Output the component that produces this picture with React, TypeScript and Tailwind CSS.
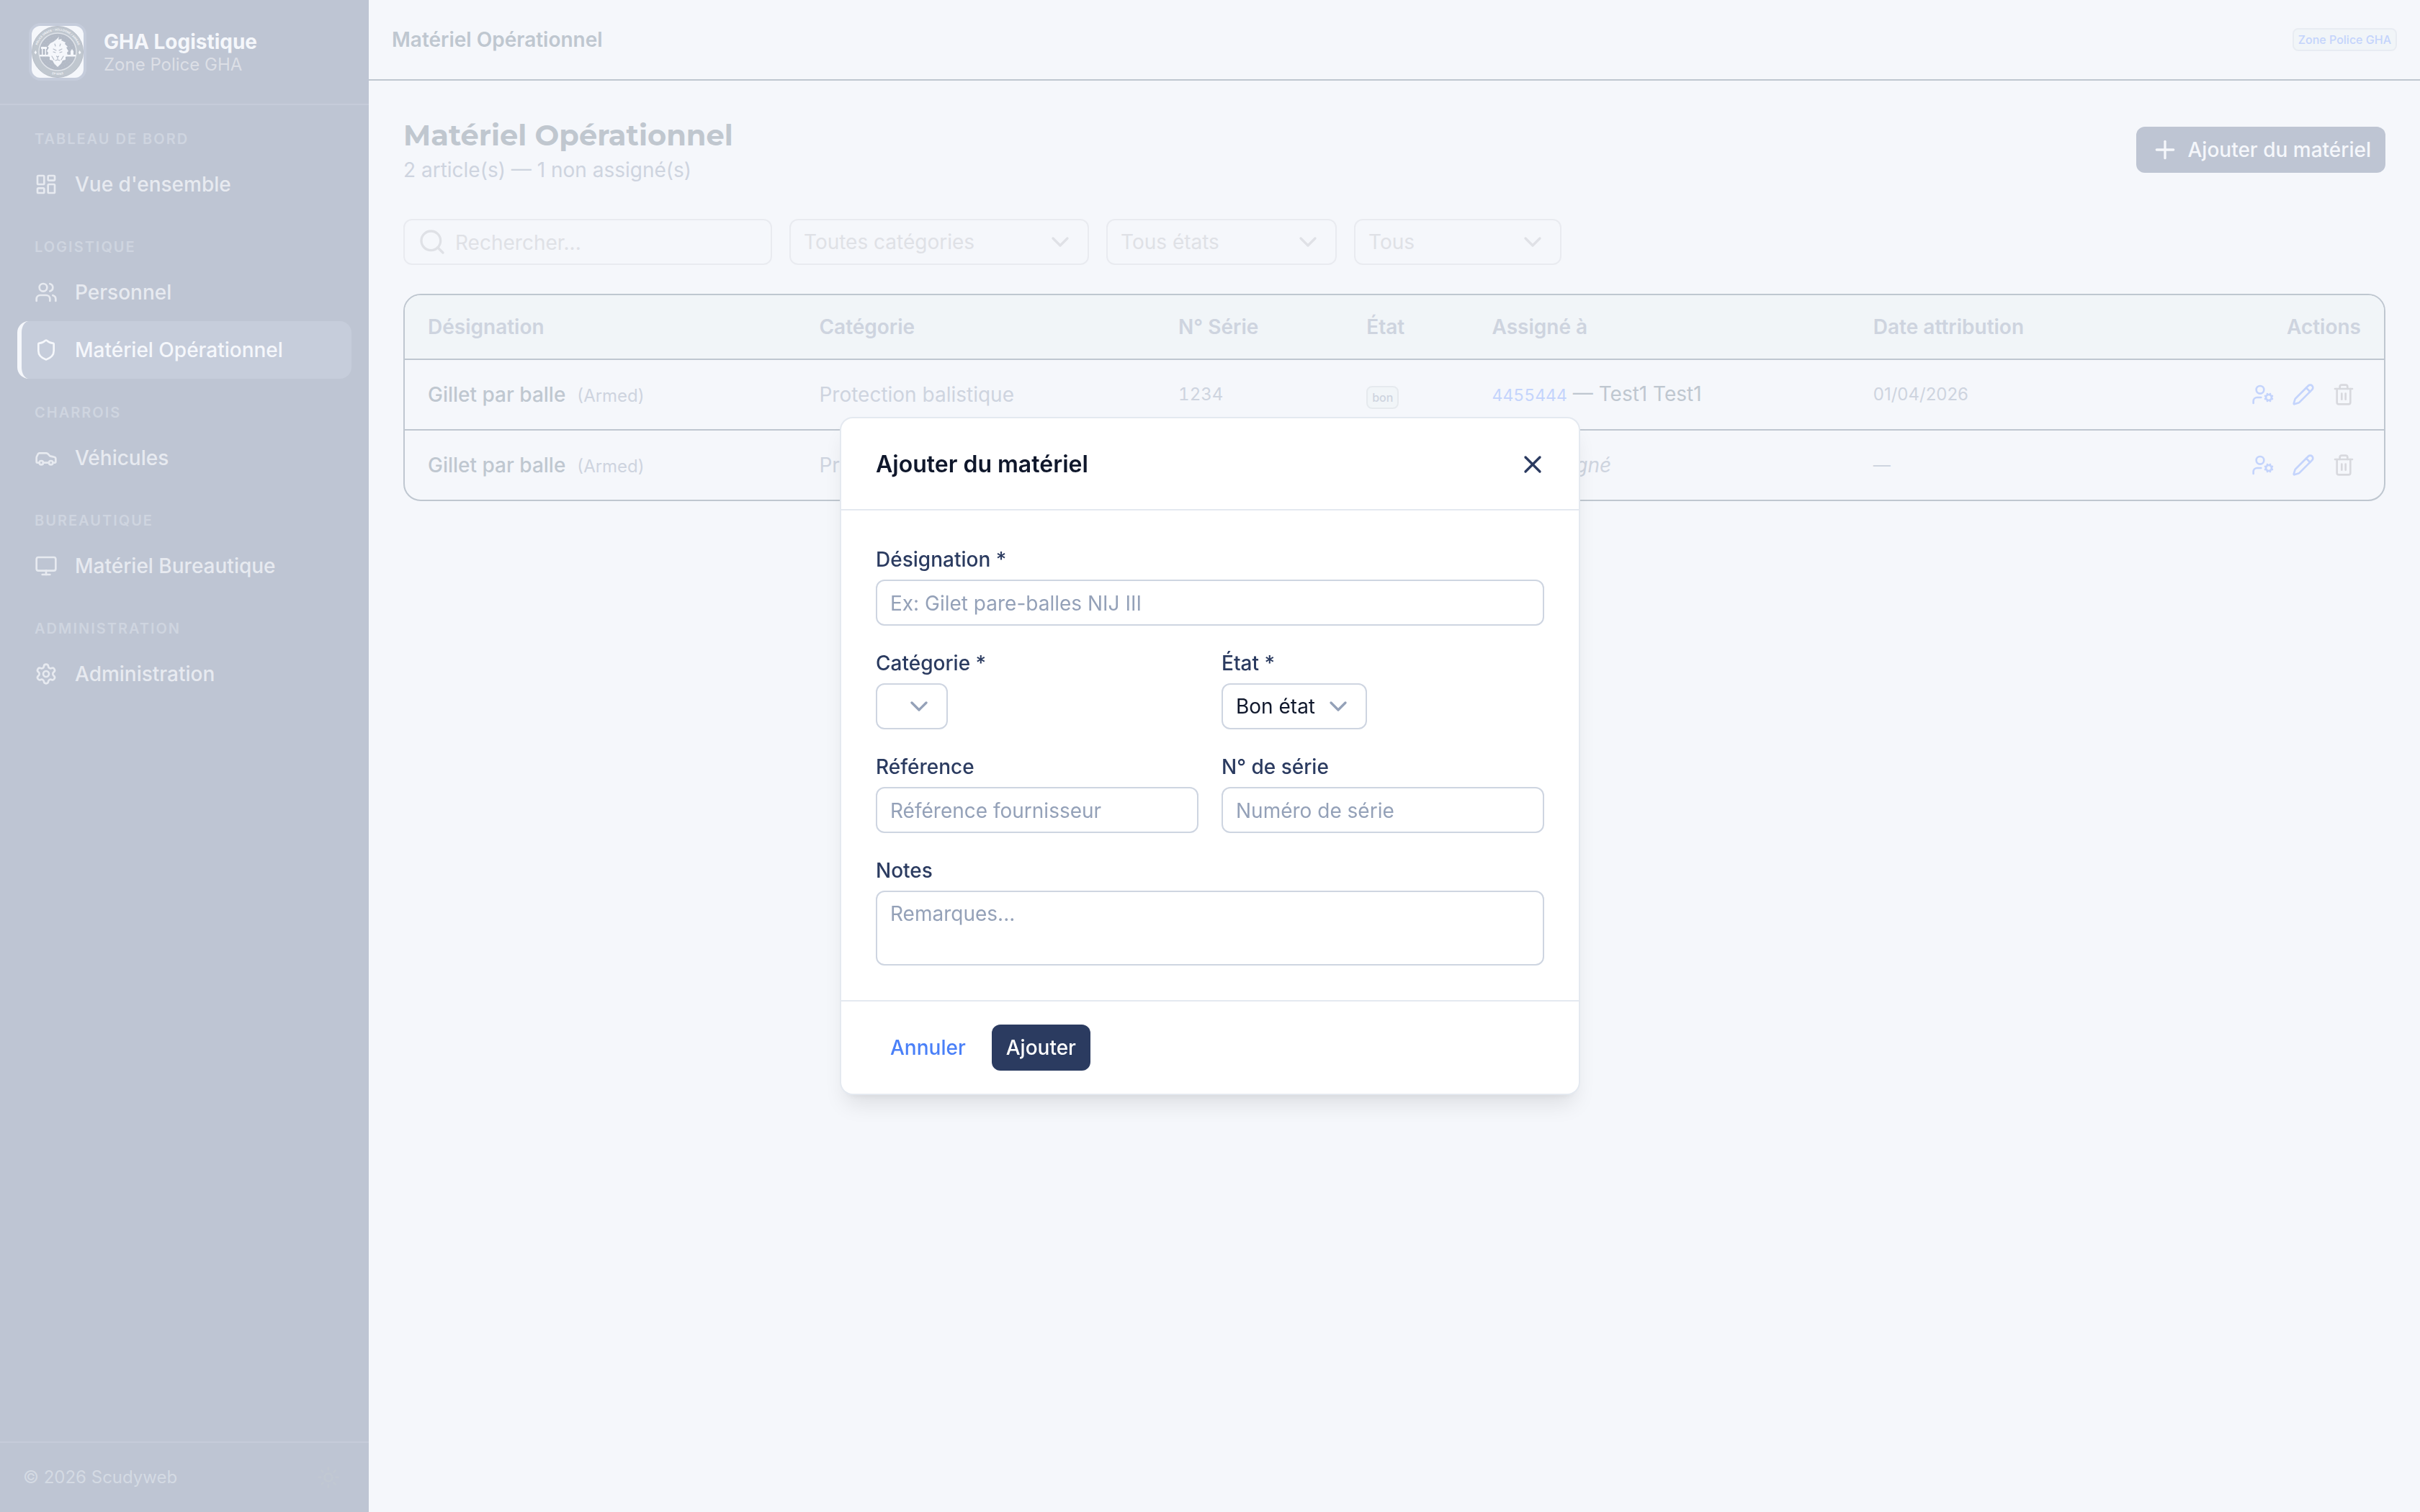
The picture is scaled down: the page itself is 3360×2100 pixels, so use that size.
import React, { useState } from "react";
import {
  Car,
  ChevronDown,
  LayoutDashboard,
  Monitor,
  Pencil,
  Plus,
  Search,
  Settings,
  Shield,
  Sun,
  Trash2,
  UserCog,
  Users,
  X,
  type LucideIcon,
} from "lucide-react";

interface NavItem {
  label: string;
  icon: LucideIcon;
  active?: boolean;
}

interface NavSection {
  title: string;
  items: NavItem[];
}

interface Equipment {
  id: number;
  name: string;
  brand: string;
  category: string;
  serial: string | null;
  state: string;
  assignee: { matricule: string; name: string } | null;
  date: string | null;
}

const navSections: NavSection[] = [
  { title: "TABLEAU DE BORD", items: [{ label: "Vue d'ensemble", icon: LayoutDashboard }] },
  {
    title: "LOGISTIQUE",
    items: [
      { label: "Personnel", icon: Users },
      { label: "Matériel Opérationnel", icon: Shield, active: true },
    ],
  },
  { title: "CHARROIS", items: [{ label: "Véhicules", icon: Car }] },
  { title: "BUREAUTIQUE", items: [{ label: "Matériel Bureautique", icon: Monitor }] },
  { title: "ADMINISTRATION", items: [{ label: "Administration", icon: Settings }] },
];

const equipment: Equipment[] = [
  {
    id: 1,
    name: "Gillet par balle",
    brand: "Armed",
    category: "Protection balistique",
    serial: "1234",
    state: "bon",
    assignee: { matricule: "4455444", name: "Test1 Test1" },
    date: "01/04/2026",
  },
  {
    id: 2,
    name: "Gillet par balle",
    brand: "Armed",
    category: "Protection balistique",
    serial: "1235",
    state: "bon",
    assignee: null,
    date: null,
  },
];

const fieldClass =
  "block w-full rounded-xl border-2 border-[#ced5e1] bg-white px-[18px] text-[28px] leading-10 text-[#0f172b] placeholder:text-[#94a1b8] focus:outline-none";

function Logo() {
  return (
    <div className="size-20 shrink-0 rounded-2xl bg-[#c5ccdb] p-1">
      <svg viewBox="0 0 72 72" className="size-full rounded-xl bg-[#f5f7fb]" aria-label="Zone Police GHA" role="img">
        <defs>
          <path id="logo-top" d="M6.500 36a29.500 29.500 0 0 1 59 0" />
          <path id="logo-bottom" d="M4 36a32 32 0 0 0 64 0" />
        </defs>
        <circle cx="36" cy="36" r="35.500" fill="#c0c7cf" stroke="#b7bdc7" />
        <circle cx="36" cy="36" r="26" fill="#b3bac6" stroke="#dfe3e9" strokeWidth="1.500" />
        <circle cx="36" cy="36" r="22" fill="none" stroke="#c3c9d3" strokeDasharray="1 3" />
        <circle cx="36" cy="36" r="18" fill="none" stroke="#c3c9d3" strokeDasharray="1 3" />
        <text fontSize="4" fontWeight="700" fill="#f0f2f6" fontFamily="Inter, sans-serif" textAnchor="middle">
          <textPath href="#logo-top" startOffset="50%">POLICE GRACE - HOLLOGNE / AWANS</textPath>
        </text>
        <text fontSize="4" fontWeight="700" fill="#f0f2f6" fontFamily="Inter, sans-serif" textAnchor="middle">
          <textPath href="#logo-bottom" startOffset="50%">ZP 5283</textPath>
        </text>
        {/* skyline and lion head */}
        <g fill="#f5f7fb">
          <path d="M11 40h14v2.500H11zM47 40h14v2.500H47zM13 29h8v3h-1v8h-1.500v-8h-3v8H14v-8h-1zM54 40v-5l2-3 2 3v5z" />
          <path d="M38 15l-1 4 5-1-1 2 6 3-1 2 4 4-2 1 3 5-2 2 1 4-3 2 0 4-4 1-2 4-5 5-5-5-2-4-4-1 0-4-3-2 1-4-2-2 3-5-2-1 4-5 4-2 4-3z" />
          <path d="M3.500 37l2-3 1.500 3-1.500 2.500zM65 37l1.500-3 2 3-2 2.500z" />
        </g>
        <path
          d="M30 32l4 2M42 32l-4 2M30 36l3 1M42 36l-3 1M34.500 42l1.500 1.500 1.500-1.500M36 44v2M33 48l3-1 3 1M28 42l3 5M44 42l-3 5M32 25l1 3M40 25l-1 3"
          fill="none"
          stroke="#b3bac6"
          strokeWidth="1.100"
          strokeLinecap="round"
        />
      </svg>
    </div>
  );
}

function Sidebar() {
  return (
    <aside className="flex w-[512px] shrink-0 flex-col bg-[#bec5d3]">
      <div className="flex items-center gap-6 border-b-2 border-[#c6ccda] px-10 py-8">
        <Logo />
        <div>
          <p className="text-[28px] leading-9 font-bold text-[#f5f7fb]">GHA Logistique</p>
          <p className="text-2xl leading-7 text-[#dcdfe6]">Zone Police GHA</p>
        </div>
      </div>

      <nav className="flex flex-1 flex-col gap-8 px-6 pt-8">
        {navSections.map((section) => (
          <div key={section.title}>
            <p className="mb-2 px-6 text-xl leading-[30px] font-semibold tracking-widest text-[#cfd5e0]">{section.title}</p>
            {section.items.map((item) => (
              <a
                key={item.label}
                href="#"
                className={`flex h-20 items-center gap-6 rounded-2xl border-l-[6px] pl-[18px] text-[28px] font-medium ${
                  item.active ? "border-[#f5f7fb] bg-[#c6cddb] text-[#f5f7fb]" : "border-transparent text-[#e7eaf0]"
                }`}
              >
                <item.icon className="size-8" />
                {item.label}
              </a>
            ))}
          </div>
        ))}
      </nav>

      <div className="flex h-[98px] items-center justify-between border-t-2 border-[#c6ccda] px-8">
        <span className="text-2xl text-[#d4dae3]">© 2026 Scudyweb</span>
        <button type="button" aria-label="Changer de thème" className="p-2 text-[#c1c8d2]">
          <Sun className="size-8" />
        </button>
      </div>
    </aside>
  );
}

function FilterSelect({ label, className }: { label: string; className: string }) {
  return (
    <div className={`relative ${className}`}>
      <select
        aria-label={label}
        className="h-16 w-full appearance-none rounded-xl border-2 border-[#e9ebf0] bg-transparent pr-16 pl-[18px] text-[28px] text-[#dfe1e6]"
      >
        <option>{label}</option>
      </select>
      <ChevronDown className="pointer-events-none absolute top-3 right-5 size-10 text-[#dfe1e6]" />
    </div>
  );
}

function FormSelect({ id, label, options, className }: { id: string; label: string; options: string[]; className: string }) {
  return (
    <div className="flex flex-col gap-2">
      <label htmlFor={id} className="text-[28px] leading-10 font-medium text-[#2b3b60]">
        {label}
      </label>
      <div className={`relative ${className}`}>
        <select
          id={id}
          className="h-16 w-full appearance-none rounded-xl border-2 border-[#ced5e1] bg-white pl-[18px] text-[28px] text-[#0f172b]"
        >
          {options.map((option) => (
            <option key={option}>{option}</option>
          ))}
        </select>
        <ChevronDown className="pointer-events-none absolute top-3 right-5 size-10 text-[#94a1b8]" />
      </div>
    </div>
  );
}

function FormInput({ id, label, placeholder }: { id: string; label: string; placeholder: string }) {
  return (
    <div className="flex flex-col gap-2">
      <label htmlFor={id} className="text-[28px] leading-10 font-medium text-[#2b3b60]">
        {label}
      </label>
      <input id={id} type="text" placeholder={placeholder} className={`${fieldClass} h-16 pt-0.5`} />
    </div>
  );
}

function EquipmentTable() {
  return (
    <div className="mt-10 overflow-hidden rounded-3xl border-2 border-[#bfc7d0]">
      <table className="w-full border-separate border-spacing-0 text-left text-[28px] leading-10">
        <thead className="bg-[#f1f5f8] text-[#ced4df]">
          <tr className="h-[90px] *:border-b-2 *:border-[#bfc7d0] *:px-8 *:font-semibold">
            <th>Désignation</th>
            <th>Catégorie</th>
            <th>N° Série</th>
            <th>État</th>
            <th>Assigné à</th>
            <th>Date attribution</th>
            <th className="text-right">Actions</th>
          </tr>
        </thead>
        <tbody className="text-[#ced4df]">
          {equipment.map((item) => (
            <tr key={item.id} className="h-[98px] *:border-[#bfc7d0] *:px-8 not-last:*:border-b-2 last:h-24">
              <td>
                <span className="font-medium text-[#bfc7d0]">{item.name}</span>
                <span className="ml-4 text-2xl">({item.brand})</span>
              </td>
              <td>{item.category}</td>
              <td className="text-2xl tabular-nums">{item.serial}</td>
              <td>
                <span className="inline-flex rounded-lg border-2 border-[#e6eaee] bg-[#f1f5f8] px-1.5 py-0.5 text-base leading-6 font-medium">
                  {item.state}
                </span>
              </td>
              <td>
                {item.assignee ? (
                  <span className="text-[#bfc7d0]">
                    <a href="#" className="text-[23px] text-[#c4d4fc] tabular-nums">
                      {item.assignee.matricule}
                    </a>{" "}
                    — {item.assignee.name}
                  </span>
                ) : (
                  <span className="italic">Non assigné</span>
                )}
              </td>
              <td className="text-2xl">{item.date ?? "—"}</td>
              <td>
                <div className="flex justify-end gap-2">
                  <button type="button" aria-label="Assigner" className="p-2 text-[#c4d4fc]">
                    <UserCog className="size-8" />
                  </button>
                  <button type="button" aria-label="Modifier" className="p-2 text-[#c4d4fc]">
                    <Pencil className="size-8" />
                  </button>
                  <button type="button" aria-label="Supprimer" className="p-2 text-[#d8d9de]">
                    <Trash2 className="size-8" />
                  </button>
                </div>
              </td>
            </tr>
          ))}
        </tbody>
      </table>
    </div>
  );
}

function AddEquipmentModal({ onClose }: { onClose: () => void }) {
  return (
    <div className="fixed inset-0 flex items-center justify-center">
      <div
        role="dialog"
        aria-labelledby="modal-title"
        className="w-[1024px] rounded-2xl bg-white shadow-[0_20px_30px_-6px_rgb(0_0_0/0.1),0_8px_12px_-8px_rgb(0_0_0/0.1)] ring-2 ring-[#e4e9f0]"
      >
        <div className="flex h-32 items-center justify-between border-b-2 border-[#e4e9f0] pt-0.5 pr-8 pl-12">
          <h2 id="modal-title" className="text-[32px] font-semibold text-[#0f172b]">
            Ajouter du matériel
          </h2>
          <button type="button" aria-label="Fermer" onClick={onClose} className="p-3 text-[#2b3b60]">
            <X className="size-10" />
          </button>
        </div>

        <form className="flex flex-col gap-8 p-12">
          <FormInput id="designation" label="Désignation *" placeholder="Ex: Gilet pare-balles NIJ III" />
          <div className="grid grid-cols-2 gap-8">
            <FormSelect id="categorie" label="Catégorie *" options={[""]} className="w-[100px]" />
            <FormSelect id="etat" label="État *" options={["Bon état"]} className="w-[202px]" />
          </div>
          <div className="grid grid-cols-2 gap-8">
            <FormInput id="reference" label="Référence" placeholder="Référence fournisseur" />
            <FormInput id="serie" label="N° de série" placeholder="Numéro de série" />
          </div>
          <div className="flex flex-col gap-2">
            <label htmlFor="notes" className="text-[28px] leading-10 font-medium text-[#2b3b60]">
              Notes
            </label>
            <textarea id="notes" rows={2} placeholder="Remarques..." className={`${fieldClass} resize-none py-2.5`} />
          </div>
        </form>

        <div className="flex gap-4 border-t-2 border-[#e4e9f0] px-12 py-8">
          <button type="button" onClick={onClose} className="h-16 px-5 text-[28px] font-medium text-[#4a80f8]">
            Annuler
          </button>
          <button type="button" className="h-16 rounded-xl bg-[#2b3b60] px-5 text-[28px] font-medium text-white">
            Ajouter
          </button>
        </div>
      </div>
    </div>
  );
}

export default function App() {
  const [modalOpen, setModalOpen] = useState(true);

  return (
    <div className="flex min-h-screen bg-[#f5f7fb] font-[Inter,sans-serif]">
      <Sidebar />

      <div className="flex min-w-0 flex-1 flex-col">
        <header className="flex h-28 items-center justify-between border-b-2 border-[#bfc7d0] px-8">
          <p className="text-[28px] font-semibold text-[#bfc7d0]">Matériel Opérationnel</p>
          <span className="rounded-lg border-2 border-[#e8ecf2] bg-[#f1f5f8] px-1.5 py-0.5 text-base leading-6 font-medium text-[#c4d4fc]">
            Zone Police GHA
          </span>
        </header>

        <main className="p-12">
          <div className="flex items-center justify-between">
            <div>
              <h1 className="font-[Montserrat,Inter,sans-serif] text-[40px] leading-[56px] font-bold text-[#c0c7cf]">
                Matériel Opérationnel
              </h1>
              <p className="text-[28px] leading-10 text-[#ced4df]">2 article(s) — 1 non assigné(s)</p>
            </div>
            <button
              type="button"
              onClick={() => setModalOpen(true)}
              className="flex h-16 items-center gap-3 rounded-xl bg-[#bec5d3] px-5 text-[28px] font-medium text-[#f5f7fb]"
            >
              <Plus className="size-10" />
              Ajouter du matériel
            </button>
          </div>

          <div className="mt-12 flex gap-6">
            <div className="relative w-[512px]">
              <Search className="absolute top-3 left-5 size-10 text-[#dfe1e6]" />
              <input
                type="text"
                aria-label="Rechercher"
                placeholder="Rechercher..."
                className="h-16 w-full rounded-xl border-2 border-[#e9ebf0] bg-transparent pt-0.5 pr-5 pl-[70px] text-[28px] placeholder:text-[#dfe1e6]"
              />
            </div>
            <FilterSelect label="Toutes catégories" className="w-[416px]" />
            <FilterSelect label="Tous états" className="w-80" />
            <FilterSelect label="Tous" className="w-72" />
          </div>

          <EquipmentTable />
        </main>
      </div>

      {modalOpen && <AddEquipmentModal onClose={() => setModalOpen(false)} />}
    </div>
  );
}
